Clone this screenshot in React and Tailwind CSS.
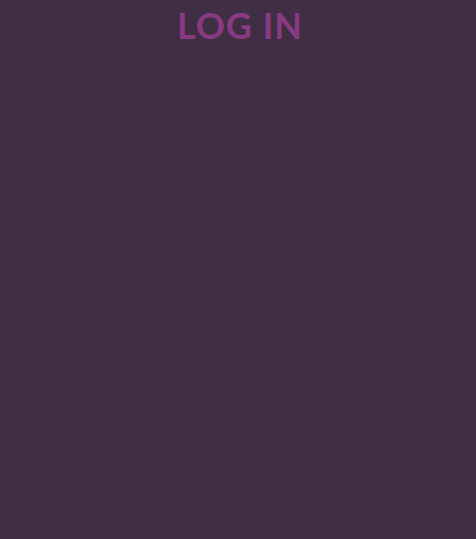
export default function App() {
  return (
    <div className="min-h-[539px] w-full bg-[#402e44] flex flex-col items-center">
      <h1
        className="mt-[3px] ml-[4px] text-[36px] leading-[44px] font-bold text-[#8a3a82] tracking-[1px]"
        style={{ fontFamily: 'Lato, "Open Sans", sans-serif' }}
      >
        LOG IN
      </h1>
    </div>
  )
}
